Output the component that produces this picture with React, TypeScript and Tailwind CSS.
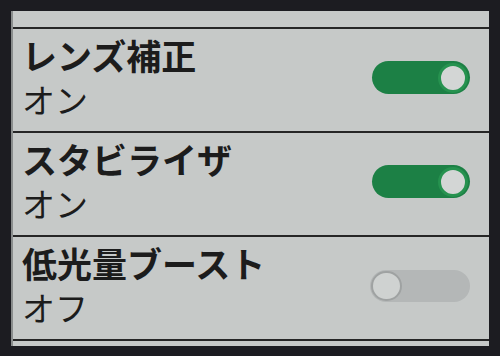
import React from "react";

interface Setting {
  title: string;
  on: boolean;
}

const settings: Setting[] = [
  { title: "レンズ補正", on: true },
  { title: "スタビライザ", on: true },
  { title: "低光量ブースト", on: false },
];

function Toggle({ on }: { on: boolean }) {
  if (on) {
    return (
      <div className="flex h-[33px] w-[98px] items-center justify-end rounded-full bg-[#1c8045] pr-[2px]">
        <div className="h-[30px] w-[30px] rounded-full border-[3px] border-[#26924f] bg-[#d3d6d5]" />
      </div>
    );
  }
  return (
    <div className="flex h-[32px] w-[100px] items-center rounded-full bg-[#b4b7b7] pl-[1px]">
      <div className="h-[30px] w-[31px] rounded-full border-2 border-[#9fa2a2] bg-[#cfd2d1]" />
    </div>
  );
}

export default function App() {
  return (
    <div
      className="h-[356px] w-[500px] bg-[#1c1c21] px-[11px] pt-[11px]"
      style={{ fontFamily: '"Noto Sans CJK JP", "Noto Sans", sans-serif' }}
    >
      <div className="flex h-[335px] flex-col border-l-2 border-[#8a8d8d] bg-[#c6c9c8]">
        <div className="h-[18px] shrink-0 border-b-2 border-[#262626]" />
        {settings.map((s) => (
          <div
            key={s.title}
            className="flex h-[104px] shrink-0 items-center justify-between border-b-2 border-[#262626] pl-[9px] pr-[19px]"
          >
            <div className="-mt-[6px] flex flex-col text-[#1c1c1c]">
              <div className="h-[44px] text-[35px] font-bold leading-[44px]">{s.title}</div>
              <div className="h-[44px] text-[33px] leading-[44px]">{s.on ? "オン" : "オフ"}</div>
            </div>
            <div className="-mt-[5px]">
              <Toggle on={s.on} />
            </div>
          </div>
        ))}
      </div>
    </div>
  );
}
